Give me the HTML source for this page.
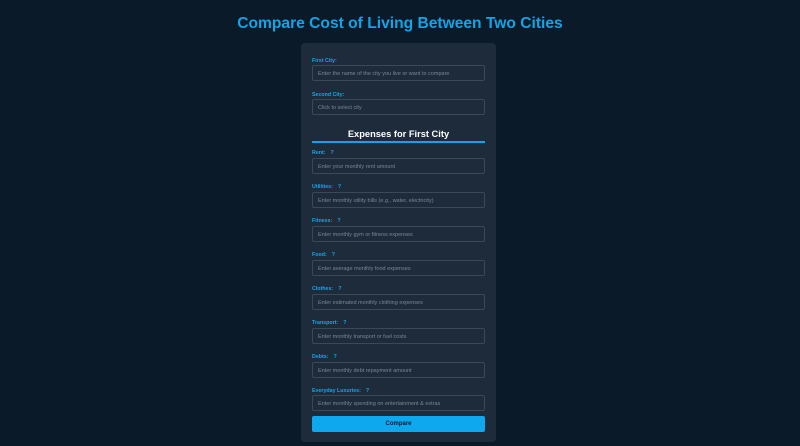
<!DOCTYPE html><html><head><style>
body{margin:0;width:800px;height:446px;background:#0b1a29;font-family:"Liberation Sans",sans-serif;position:relative;overflow:hidden}
h1{position:absolute;top:15px;left:0;width:800px;text-align:center;margin:0;font-size:15.6px;color:#12a4e8;font-weight:bold}
.card{position:absolute;left:301px;top:43px;width:195px;height:399px;background:#1e2b3b;border-radius:4px}
.l{position:absolute;left:11px;font-size:5.3px;font-weight:bold;color:#17a5ea}
.l span{margin-left:5px}
.i{position:absolute;left:11px;width:173px;height:16px;border:1px solid #3b4858;border-radius:2px;box-sizing:border-box;font-size:5.5px;color:#7b8794;line-height:16px;padding-left:5px;background:#1e2b3b;overflow:hidden}
.h{position:absolute;left:11px;width:173px;top:86px;text-align:center;color:#fff;font-weight:bold;font-size:9.3px}
.hr{position:absolute;left:11px;width:173px;top:98px;height:2px;background:#12a4e8}
.b{position:absolute;left:11px;top:373px;width:173px;height:16px;background:#0ea8ef;border-radius:2px;text-align:center;line-height:16px;font-size:6px;font-weight:bold;color:#0b1a29}
</style></head><body>
<h1>Compare Cost of Living Between Two Cities</h1>
<div class="card">
<div class="l" style="top:15px">First City:</div>
<div class="i" style="top:22px">Enter the name of the city you live or want to compare</div>
<div class="l" style="top:49px">Second City:</div>
<div class="i" style="top:56px">Click to select city</div>
<div class="h">Expenses for First City</div><div class="hr"></div>
<div class="l" style="top:107px">Rent:<span>?</span></div>
<div class="i" style="top:115px">Enter your monthly rent amount</div>
<div class="l" style="top:141px">Utilities:<span>?</span></div>
<div class="i" style="top:149px">Enter monthly utility bills (e.g., water, electricity)</div>
<div class="l" style="top:175px">Fitness:<span>?</span></div>
<div class="i" style="top:183px">Enter monthly gym or fitness expenses</div>
<div class="l" style="top:209px">Food:<span>?</span></div>
<div class="i" style="top:217px">Enter average monthly food expenses</div>
<div class="l" style="top:243px">Clothes:<span>?</span></div>
<div class="i" style="top:251px">Enter estimated monthly clothing expenses</div>
<div class="l" style="top:277px">Transport:<span>?</span></div>
<div class="i" style="top:285px">Enter monthly transport or fuel costs</div>
<div class="l" style="top:311px">Debts:<span>?</span></div>
<div class="i" style="top:319px">Enter monthly debt repayment amount</div>
<div class="l" style="top:345px">Everyday Luxuries:<span>?</span></div>
<div class="i" style="top:352px">Enter monthly spending on entertainment &amp; extras</div>
<div class="b">Compare</div>
</div>
</body></html>
